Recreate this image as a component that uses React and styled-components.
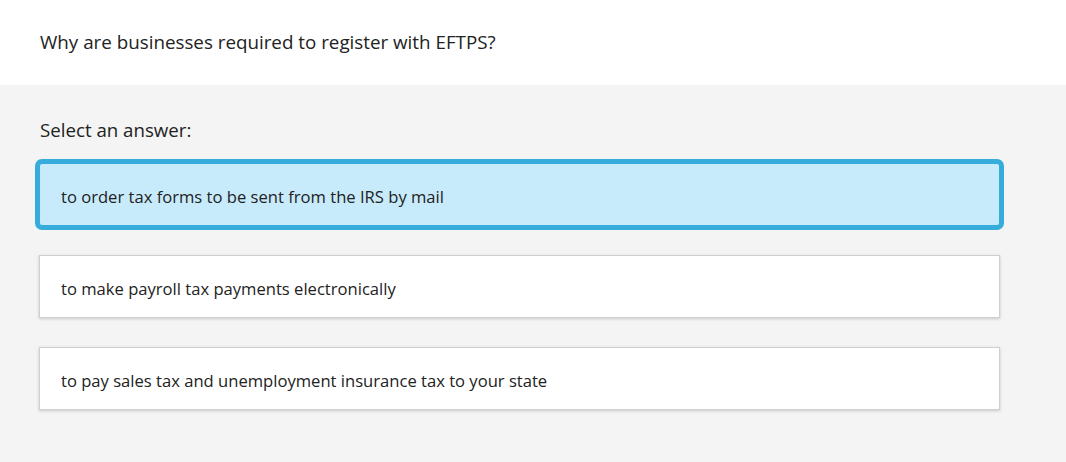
import styled, { createGlobalStyle } from "styled-components";

const GlobalStyle = createGlobalStyle`
    body {
        margin: 0;
        background: #f4f4f4;
        font-family: "Open Sans", "Noto Sans", sans-serif;
        color: #222;
    }
`

const answers = [
    "to order tax forms to be sent from the IRS by mail",
    "to make payroll tax payments electronically",
    "to pay sales tax and unemployment insurance tax to your state",
]

function App(){
    return(
        <>
            <GlobalStyle/>
            <Header>
                <Question>Why are businesses required to register with EFTPS?</Question>
            </Header>
            <Body>
                <Prompt>Select an answer:</Prompt>
                <List>
                    {answers.map((text, i) => (
                        <Option key={i} $selected={i === 0}>{text}</Option>
                    ))}
                </List>
            </Body>
        </>
    )
}

const Header = styled.div`
    background: #fff;
    height: 85px;
    display: flex;
    align-items: center;
    padding: 0 40px;
    box-sizing: border-box;
`

const Question = styled.div`
    font-size: 18.8px;
    padding-bottom: 2px;
`

const Body = styled.div`
    padding: 32px 66px 40px 39px;
`

const Prompt = styled.div`
    font-size: 18.7px;
    margin-left: 1px;
    margin-bottom: 21px;
`

const List = styled.div`
    display: flex;
    flex-direction: column;
    gap: 29px;
`

const Option = styled.div`
    height: 63px;
    box-sizing: border-box;
    display: flex;
    align-items: center;
    padding: 3px 21px 0;
    font-size: 16.6px;
    background: ${p => p.$selected ? "#c8ebfc" : "#fff"};
    border: 1px solid ${p => p.$selected ? "#36acdb" : "#cfcfcf"};
    box-shadow: ${p => p.$selected ? "0 0 0 4px #36acdb" : "0 1px 3px rgba(0,0,0,0.18)"};
    border-radius: ${p => p.$selected ? "3px" : "0"};
    cursor: pointer;
`

export default App;
